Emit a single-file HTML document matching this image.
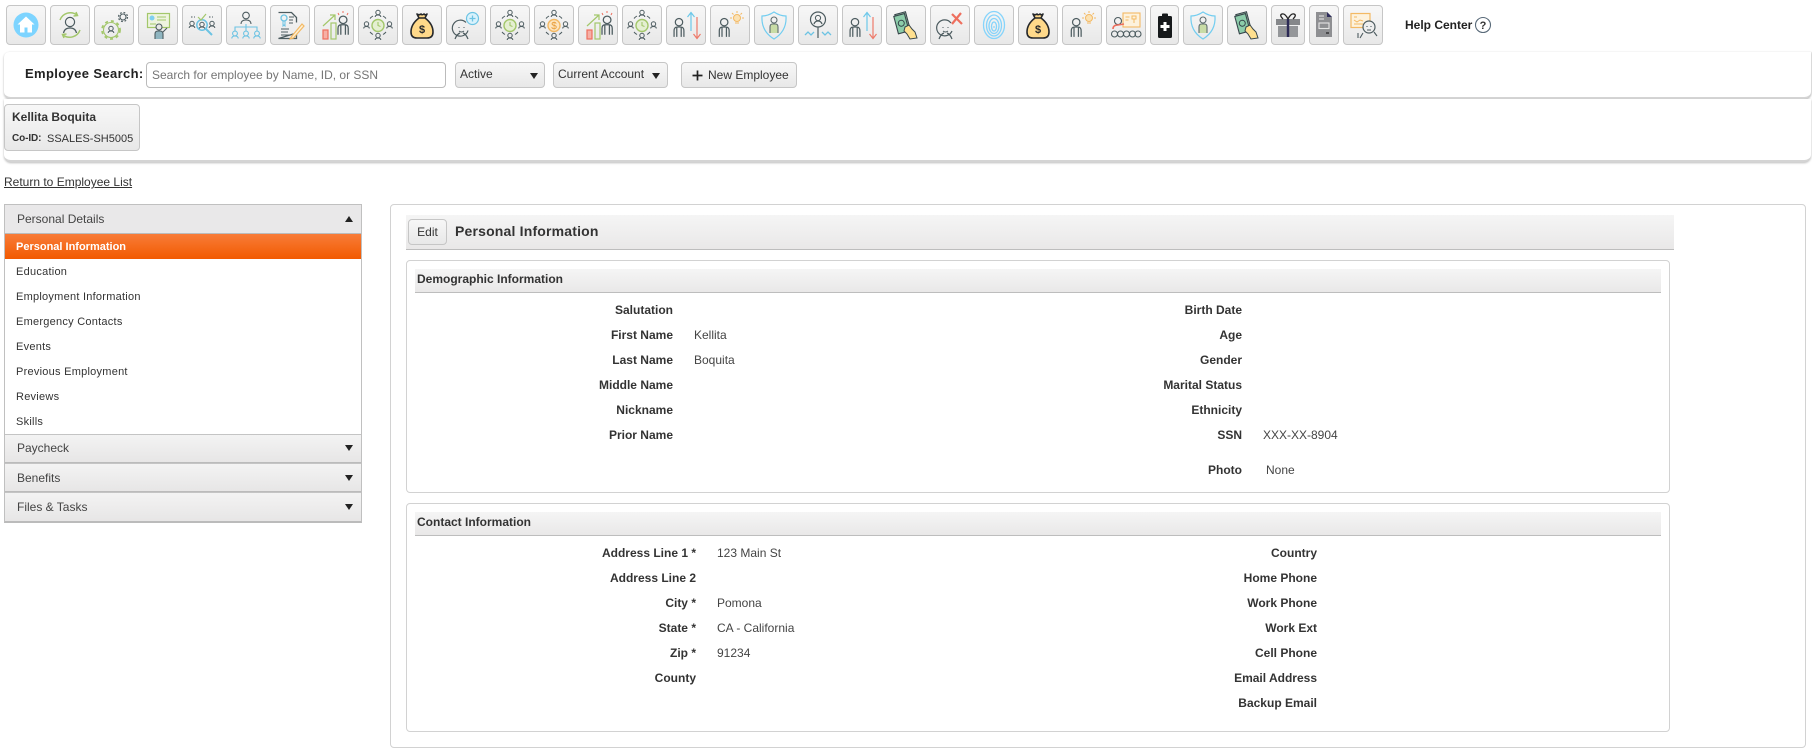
<!DOCTYPE html>
<html><head><meta charset="utf-8"><title>Personal Information</title>
<style>
html,body{margin:0;padding:0;background:#fff;width:1812px;height:753px;overflow:hidden}
body{font-family:"Liberation Sans",Arial,sans-serif;font-size:12px;color:#333;position:relative}
div,span,a,input{box-sizing:border-box}
.a{position:absolute}
.ib{position:absolute;top:5px;height:40px;width:40px;border:1px solid #c6c6c6;border-radius:4px;background:linear-gradient(#f7f7f7,#e8e8e8);overflow:hidden}
.ib svg{position:absolute;left:50%;top:-1px;margin-left:-20px;width:40px;height:40px}
.panel{position:absolute;left:4px;width:1807px;background:#fff;border-radius:0 0 7px 7px;border-bottom:2px solid #d4d4d4;box-shadow:0 1px 2px #bbb}
.btn{position:absolute;border:1px solid #c6c6c6;border-radius:4px;background:linear-gradient(#f7f7f7,#e8e8e8);color:#333}
.t{position:absolute;line-height:20px;white-space:nowrap}
.l{position:absolute;line-height:20px;white-space:nowrap;text-align:right;font-weight:bold;font-size:12px;color:#333}
.v{position:absolute;line-height:20px;white-space:nowrap;font-size:12px;color:#444}
.tri{position:absolute;width:0;height:0;border-left:5px solid transparent;border-right:5px solid transparent}
.up{border-bottom:7px solid #222}.dn{border-top:7px solid #222}
.sh{position:absolute;left:5px;width:356px;height:29px;background:linear-gradient(#f3f3f3,#e7e6e6);border-bottom:1px solid #bbb;color:#444;font-size:12px;line-height:28px;padding-left:12px}
.ni{position:absolute;left:16px;font-size:11px;line-height:20px;color:#333;letter-spacing:.25px;white-space:nowrap}
.box{position:absolute;border:1px solid #d2d2d2;border-radius:4px;background:#fff}
.hd{position:absolute;background:linear-gradient(#f5f5f5,#e9e8e8);border-bottom:1px solid #bdbdbd}
</style></head><body>
<svg width="0" height="0" style="position:absolute">
<defs>
<g id="p"><circle cx="0" cy="-5" r="3" fill="none" stroke="#4d5c60" stroke-width="1"/><path d="M-4 7V2q0-3 2.500-3h3q2.500 0 2.500 3v5M-1.800 -1v8M1.800 -1v8" fill="none" stroke="#4d5c60" stroke-width="1"/></g>
<g id="h"><circle cx="0" cy="-1.500" r="2.200" fill="none" stroke="#4d5c60" stroke-width="1"/><path d="M-2.800 3q0-2 2.800-2t2.800 2" fill="none" stroke="#4d5c60" stroke-width="1"/></g>
<g id="hb"><circle cx="0" cy="-1.500" r="2.400" fill="none" stroke="#6cc3e3" stroke-width="1.100"/><path d="M-3.200 3.500q0-2.500 3.200-2.500t3.200 2.500" fill="none" stroke="#6cc3e3" stroke-width="1.100"/></g>
<g id="cp"><use href="#h" x="20" y="9"/><use href="#h" x="20" y="32"/><use href="#h" x="8.500" y="20.500"/><use href="#h" x="31.500" y="20.500"/><path d="M12 13.500A11 11 0 0 1 15 11M25 11A11 11 0 0 1 28 13.500M12 27A11 11 0 0 0 15 29.500M25 29.500A11 11 0 0 0 28 27" fill="none" stroke="#4d5c60" stroke-width="1"/></g>
<g id="chart"><rect x="9" y="25" width="5" height="9" fill="#f6b0a6" stroke="#ee6f5e" stroke-width="1.200"/><rect x="17" y="18" width="5" height="16" fill="none" stroke="#a3c76b" stroke-width="1.200"/><path d="M9 21L21 10M16 10h5v5" fill="none" stroke="#a3c76b" stroke-width="1.200"/><use href="#p" x="29" y="21" transform="translate(-8 -5) scale(1.28 1.24)"/><path d="M29 6v2M24 8l1 2M34 8l-1 2" stroke="#ee6f5e" stroke-width="1"/></g>
<g id="bag"><path d="M15 9l2 4h6l2-4q-2 1.500-3 0-2 1.500-3 0-2 1.500-4 0zM17 13q-8 6-8 14 0 6 6 6h10q6 0 6-6 0-8-8-14z" fill="#ffd98a" stroke="#26282b" stroke-width="1.600" stroke-linejoin="round"/><text x="20" y="28" text-anchor="middle" font-family="Liberation Sans" font-weight="bold" font-size="11" fill="#26282b">$</text></g>
<g id="arr"><use href="#p" x="13" y="23" transform="translate(-3 -5) scale(1.23 1.23)"/><path d="M25 26V8M21.500 12L25 7.500 28.500 12" fill="none" stroke="#6cc8ea" stroke-width="1.200"/><path d="M31 12V33M27.500 29L31 33.500 34.500 29" fill="none" stroke="#ee7a6a" stroke-width="1.200"/></g>
<g id="bulb"><use href="#p" x="14" y="23" transform="translate(-3 -5) scale(1.23 1.23)"/><circle cx="27" cy="13" r="3.500" fill="#fbe2b4" stroke="#f3b964" stroke-width="1"/><path d="M25 18h4M27 6v2M20 13h2M32 13h2M22 8l1.500 1.500M32 8l-1.500 1.500" stroke="#f3b964" stroke-width="1"/></g>
<g id="sh"><path d="M20 7q6 4 12 4 1 15-12 23Q7 26 8 11q6 0 12-4z" fill="none" stroke="#72cdf0" stroke-width="1.200"/><circle cx="20" cy="15" r="3" fill="none" stroke="#5e6c6e" stroke-width="1.100"/><path d="M16 28v-6q0-3 2.500-3h3q2.500 0 2.500 3v6" fill="#c8dca6" stroke="#5e6c6e" stroke-width="1.100"/></g>
<g id="mh"><g transform="rotate(-15 16 17)"><rect x="11" y="8" width="11" height="19" fill="#a9c9b0" stroke="#36454a" stroke-width="1.100"/><rect x="9.500" y="9.500" width="11" height="18" fill="#8ccdaa" stroke="#36454a" stroke-width="1.100"/><circle cx="15" cy="18" r="3" fill="none" stroke="#36454a" stroke-width="1"/></g><path d="M19 22l4-2 3 4 3 3 2 6-7 1-3-5-3-3z" fill="#ffe08f" stroke="#36454a" stroke-width="1"/></g>
</defs></svg>

<!-- toolbar -->
<div class="ib" style="left:6px"><svg viewBox="0 0 40 40"><circle cx="20" cy="20" r="12.500" fill="#7dd4ff"/><path d="M20 11.500L11.500 19.500h2.500v8h4.500v-5h3v5h4.500v-8h2.500z" fill="#fff"/></svg></div>
<div class="ib" style="left:50px"><svg viewBox="0 0 40 40"><path d="M10 15A11 11 0 0 1 27 10M30 25A11 11 0 0 1 13 30M26 7l1.500 3.500L23.500 11M14 33l-1.500-3.500 4-.5" fill="none" stroke="#a3c76b" stroke-width="1.500"/><circle cx="20" cy="17" r="4.600" fill="none" stroke="#4d5c60" stroke-width="1.200"/><path d="M13.500 28q1-5 6.500-5t6.500 5" fill="none" stroke="#4d5c60" stroke-width="1.200"/></svg></div>
<div class="ib" style="left:94px"><svg viewBox="0 0 40 40"><circle cx="17" cy="25" r="7.500" fill="none" stroke="#a3c76b" stroke-width="1.100"/><circle cx="17" cy="25" r="9" fill="none" stroke="#a3c76b" stroke-width="1.800" stroke-dasharray="3 3"/><use href="#h" x="17" y="25"/><circle cx="29" cy="12" r="3" fill="none" stroke="#4d5c60" stroke-width="1.100"/><circle cx="29" cy="12" r="4.500" fill="none" stroke="#4d5c60" stroke-width="1.200" stroke-dasharray="1.800 1.800"/></svg></div>
<div class="ib" style="left:138px"><svg viewBox="0 0 40 40"><rect x="9.500" y="8.500" width="22" height="14" fill="#eef4df" stroke="#a3c76b" stroke-width="1.200"/><circle cx="14" cy="13" r="2.500" fill="#7fd0f0"/><path d="M19 12h9M19 15h9M12 19h6" stroke="#a3c76b" stroke-width="1"/><circle cx="21" cy="22" r="3" fill="#e8e8e8" stroke="#4d5c60" stroke-width="1.100"/><path d="M17 34v-5q0-3 3-3h2q3 0 3 3v5" fill="#8fb5c0" stroke="#4d5c60" stroke-width="1.100"/><path d="M25 27l4-4" stroke="#4d5c60" stroke-width="1.100"/></svg></div>
<div class="ib" style="left:182px"><svg viewBox="0 0 40 40"><use href="#h" x="10" y="20"/><use href="#h" x="30" y="20"/><use href="#h" x="20" y="21"/><circle cx="20" cy="20" r="5.200" fill="none" stroke="#6cc3e3" stroke-width="1.500"/><path d="M24 24l6 6" stroke="#6cc3e3" stroke-width="2"/><path d="M16 12l3 3 5-6" fill="none" stroke="#a3c76b" stroke-width="1.200"/><path d="M9 12h4M27 12h4" stroke="#4d5c60" stroke-width="1" stroke-dasharray="1.500 1.500"/></svg></div>
<div class="ib" style="left:226px"><svg viewBox="0 0 40 40"><circle cx="20" cy="10.500" r="3.300" fill="none" stroke="#4d5c60" stroke-width="1.100"/><path d="M15 19q0-4 5-4t5 4" fill="none" stroke="#4d5c60" stroke-width="1.100"/><path d="M20 19v3M9 26v-4h22v4M20 22v4" fill="none" stroke="#6cc3e3" stroke-width="1.100"/><use href="#hb" x="9" y="30"/><use href="#hb" x="20" y="30"/><use href="#hb" x="31" y="30"/></svg></div>
<div class="ib" style="left:270px"><svg viewBox="0 0 40 40"><path d="M8.500 7.500h13l5 5v5M26.500 28v5.500h-18z" fill="none" stroke="#4d5c60" stroke-width="1.300"/><circle cx="14" cy="13" r="3" fill="none" stroke="#6cc3e3" stroke-width="1.300"/><path d="M13 16v5l1-1 1 1v-5" fill="none" stroke="#6cc3e3" stroke-width="1"/><path d="M19 12h5M19 15h4M19 18h4M11 24h8M11 27h7M11 30h9" stroke="#4d5c60" stroke-width="1"/><path d="M22 31l-2 3 3.500-1L34 21l-2-2z" fill="#fff0d4" stroke="#f3b964" stroke-width="1.200"/></svg></div>
<div class="ib" style="left:314px"><svg viewBox="0 0 40 40"><use href="#chart"/></svg></div>
<div class="ib" style="left:358px"><svg viewBox="0 0 40 40"><use href="#cp"/><circle cx="20" cy="20.500" r="6" fill="#e5efd2" stroke="#a3c76b" stroke-width="1.400"/><path d="M20 17v3.500l2.500 1" fill="none" stroke="#a3c76b" stroke-width="1.100"/></svg></div>
<div class="ib" style="left:402px"><svg viewBox="0 0 40 40"><use href="#bag"/></svg></div>
<div class="ib" style="left:446px"><svg viewBox="0 0 40 40"><path d="M20 17.500a8 8 0 1 0 2 8M9 34q2-5 5-6M22 34q-2-5-5-6" fill="none" stroke="#4d5c60" stroke-width="1.200"/><path d="M13 22v1M18 22v1M13 26q2.500 2 5 0" fill="none" stroke="#4d5c60" stroke-width="1"/><circle cx="26.500" cy="13.500" r="6" fill="#d8f2fc" stroke="#6cc3e3" stroke-width="1.200"/><path d="M26.500 10.500v6M23.500 13.500h6" stroke="#6cc3e3" stroke-width="1.300"/></svg></div>
<div class="ib" style="left:490px"><svg viewBox="0 0 40 40"><use href="#cp"/><circle cx="20" cy="20.500" r="6" fill="#e5efd2" stroke="#a3c76b" stroke-width="1.400"/><path d="M20 17v3.500l2.500 1" fill="none" stroke="#a3c76b" stroke-width="1.100"/></svg></div>
<div class="ib" style="left:534px"><svg viewBox="0 0 40 40"><use href="#cp"/><circle cx="20" cy="20.500" r="6" fill="#fde5bf" stroke="#f3b964" stroke-width="1.400"/><text x="20" y="24" text-anchor="middle" font-family="Liberation Sans" font-size="10" fill="#e79a33">$</text></svg></div>
<div class="ib" style="left:578px"><svg viewBox="0 0 40 40"><use href="#chart"/></svg></div>
<div class="ib" style="left:622px"><svg viewBox="0 0 40 40"><use href="#cp"/><circle cx="20" cy="20.500" r="6" fill="#e5efd2" stroke="#a3c76b" stroke-width="1.400"/><path d="M20 17v3.500l2.500 1" fill="none" stroke="#a3c76b" stroke-width="1.100"/></svg></div>
<div class="ib" style="left:666px"><svg viewBox="0 0 40 40"><use href="#arr"/></svg></div>
<div class="ib" style="left:710px"><svg viewBox="0 0 40 40"><use href="#bulb"/></svg></div>
<div class="ib" style="left:754px"><svg viewBox="0 0 40 40"><use href="#sh"/></svg></div>
<div class="ib" style="left:798px"><svg viewBox="0 0 40 40"><circle cx="20" cy="14.500" r="7.500" fill="none" stroke="#4d5c60" stroke-width="1.200"/><circle cx="20" cy="13" r="2.600" fill="none" stroke="#4d5c60" stroke-width="1"/><path d="M16 19q1-3 4-3t4 3M20 22v11" fill="none" stroke="#4d5c60" stroke-width="1.200"/><path d="M7 30l3-3 3 3 3-3M24 27l3 3 3-3 3 3" fill="none" stroke="#6cc3e3" stroke-width="1.300"/></svg></div>
<div class="ib" style="left:842px"><svg viewBox="0 0 40 40"><use href="#arr"/></svg></div>
<div class="ib" style="left:886px"><svg viewBox="0 0 40 40"><use href="#mh"/></svg></div>
<div class="ib" style="left:930px"><svg viewBox="0 0 40 40"><path d="M21 18a8 8 0 1 0 1 8M9 34q2-5 5-6M22 34q-2-5-5-6" fill="none" stroke="#4d5c60" stroke-width="1.200"/><path d="M13 22v1M18 22v1M13 26q2.500 2 5 0" fill="none" stroke="#4d5c60" stroke-width="1"/><path d="M22 9l10 10M31 8L22 19" stroke="#ee6f5e" stroke-width="2.200"/></svg></div>
<div class="ib" style="left:974px"><svg viewBox="0 0 40 40"><g fill="none" stroke="#86d4fb" stroke-width="1.300"><ellipse cx="20" cy="20" rx="10.500" ry="13.500"/><ellipse cx="20" cy="20.500" rx="7.500" ry="10.500"/><ellipse cx="20" cy="21" rx="5" ry="7.500"/><ellipse cx="20" cy="21.500" rx="2.500" ry="4.500"/></g><circle cx="20" cy="22" r=".9" fill="#86d4fb"/></svg></div>
<div class="ib" style="left:1018px"><svg viewBox="0 0 40 40"><use href="#bag"/></svg></div>
<div class="ib" style="left:1062px"><svg viewBox="0 0 40 40"><use href="#bulb"/></svg></div>
<div class="ib" style="left:1106px"><svg viewBox="0 0 40 40"><rect x="17" y="8" width="17" height="14" fill="#fdf2dd" stroke="#f3b964" stroke-width="1.100"/><path d="M19.500 12h4M19.500 15h3M26 11h4v3h-4zM28 14v4" fill="none" stroke="#f3b964" stroke-width="1"/><circle cx="12" cy="16" r="3.500" fill="none" stroke="#4d5c60" stroke-width="1.100"/><path d="M7 24q0-4 5-4l6-1" fill="none" stroke="#ee6f5e" stroke-width="1.600"/><g fill="none" stroke="#4d5c60" stroke-width="1.100"><circle cx="8.500" cy="29" r="3"/><circle cx="14.500" cy="29" r="3"/><circle cx="20.500" cy="29" r="3"/><circle cx="26.500" cy="29" r="3"/><circle cx="32" cy="29" r="3"/></g></svg></div>
<div class="ib" style="left:1150px;width:29px"><svg viewBox="0 0 40 40"><rect x="13" y="11" width="14" height="22" rx="1.500" fill="#16191b"/><rect x="17" y="8.500" width="6" height="4" rx="1" fill="#16191b"/><path d="M18.500 17h3v3h3v3h-3v3h-3v-3h-3v-3h3z" fill="#fff"/></svg></div>
<div class="ib" style="left:1183px"><svg viewBox="0 0 40 40"><use href="#sh"/></svg></div>
<div class="ib" style="left:1227px"><svg viewBox="0 0 40 40"><use href="#mh"/></svg></div>
<div class="ib" style="left:1271px;width:34px"><svg viewBox="0 0 40 40"><rect x="8" y="14" width="24" height="6" fill="#85878a"/><rect x="10" y="21" width="20" height="11" fill="#949699"/><rect x="18.800" y="14" width="2.400" height="18" fill="#2c2a55"/><path d="M20 14q-3-6-6-5t1 5M20 14q3-6 6-5t-1 5" fill="none" stroke="#222" stroke-width="1.300"/></svg></div>
<div class="ib" style="left:1309px;width:30px"><svg viewBox="0 0 40 40"><path d="M12 7h11l5 5v20H12z" fill="#8e8f92"/><path d="M23 7l5 5h-5z" fill="#2d2c5a"/><path d="M15 11h5M15 14h5" stroke="#eee" stroke-width="1"/><rect x="15" y="18" width="10" height="5.500" fill="none" stroke="#e4e4e4" stroke-width="1.100"/><path d="M22 28h3" stroke="#222" stroke-width="1.200"/></svg></div>
<div class="ib" style="left:1343px"><svg viewBox="0 0 40 40"><rect x="8" y="8.500" width="19" height="14" fill="#fdf2dd" stroke="#f3b964" stroke-width="1.200"/><path d="M11 12h3M11 15l3 2 3-2 3 1M11 19h9" fill="none" stroke="#f3b964" stroke-width="1"/><circle cx="26" cy="22" r="6" fill="#eee" stroke="#4d5c60" stroke-width="1.200"/><path d="M24 21v1M28 21v1M24 25h4M20 28l-3 5M31 27l3 4M15 28v5" fill="none" stroke="#4d5c60" stroke-width="1.100"/></svg></div>
<div class="t" style="left:1405px;top:15px;font-size:12px;font-weight:bold;color:#222">Help Center</div>
<svg class="a" style="left:1474px;top:16px" width="18" height="18" viewBox="0 0 18 18"><circle cx="9" cy="9" r="7.500" fill="#fff" stroke="#5a6b7a" stroke-width="1.100"/><text x="9" y="13" text-anchor="middle" font-family="Liberation Sans" font-weight="bold" font-size="11" fill="#333">?</text></svg>

<!-- search panel -->
<div class="panel" style="top:52px;height:47px;border-top-left-radius:5px;border-top-right-radius:0;box-shadow:0 1px 2px #bbb,1px 0 1px #e6e6e6"></div>
<div class="t" style="left:25px;top:64px;font-size:13px;font-weight:bold;color:#222;letter-spacing:.37px">Employee Search:</div>
<div class="a" style="left:146px;top:62px;width:300px;height:26px;border:1px solid #bbb;border-radius:4px;background:#fff;color:#757575;font-size:12px;line-height:25px;padding-left:5px">Search for employee by Name, ID, or SSN</div>
<div class="btn" style="left:455px;top:62px;width:90px;height:26px;line-height:22px;padding-left:4px;font-size:12px">Active</div><div class="tri dn" style="left:530px;top:73px;border-left-width:4px;border-right-width:4px;border-top-width:6px"></div>
<div class="btn" style="left:553px;top:62px;width:115px;height:26px;line-height:22px;padding-left:4px;font-size:12px">Current Account</div><div class="tri dn" style="left:652px;top:73px;border-left-width:4px;border-right-width:4px;border-top-width:6px"></div>
<div class="btn" style="left:681px;top:62px;width:116px;height:26px;line-height:24px;padding-left:26px;font-size:12px">New Employee</div>
<svg class="a" style="left:691px;top:69px" width="13" height="13"><path d="M6.500 1.500v10M1.500 6.500h10" stroke="#222" stroke-width="1.700"/></svg>

<!-- employee panel -->
<div class="panel" style="top:99px;height:63px"></div>
<div class="btn" style="left:4px;top:104px;width:136px;height:47px"></div>
<div class="t" style="left:12px;top:107px;font-size:12px;font-weight:bold;color:#333">Kellita Boquita</div>
<div class="t" style="left:12px;top:129px;font-size:10px;font-weight:bold;color:#333;letter-spacing:-.1px">Co-ID:</div>
<div class="t" style="left:47px;top:129px;font-size:11px;color:#333">SSALES-SH5005</div>

<a class="t" style="left:4px;top:172px;font-size:12px;color:#333;text-decoration:underline">Return to Employee List</a>

<!-- sidebar -->
<div class="a" style="left:4px;top:204px;width:358px;height:319px;border:1px solid #c0c0c0;border-bottom:2px solid #bbb;background:#fff"></div>
<div class="sh" style="top:205px;background:#e9e8e9">Personal Details</div><div class="tri up" style="left:345px;top:216px;border-left-width:4px;border-right-width:4px;border-bottom-width:6px"></div>
<div class="a" style="left:5px;top:234px;width:356px;height:25px;background:linear-gradient(#f87c38,#f25a00);color:#fff;font-size:11px;font-weight:bold;line-height:27px;padding-left:11px">Personal Information</div>
<div class="ni" style="top:262px">Education</div>
<div class="ni" style="top:287px">Employment Information</div>
<div class="ni" style="top:312px">Emergency Contacts</div>
<div class="ni" style="top:337px">Events</div>
<div class="ni" style="top:362px">Previous Employment</div>
<div class="ni" style="top:387px">Reviews</div>
<div class="ni" style="top:412px">Skills</div>
<div class="sh" style="top:434px;border-top:1px solid #c4c4c4;line-height:27px">Paycheck</div><div class="tri dn" style="left:345px;top:445px;border-left-width:4px;border-right-width:4px;border-top-width:6px"></div>
<div class="sh" style="top:463px;border-top:1px solid #c4c4c4;line-height:28px">Benefits</div><div class="tri dn" style="left:345px;top:475px;border-left-width:4px;border-right-width:4px;border-top-width:6px"></div>
<div class="sh" style="top:492px;border-top:1px solid #c4c4c4;line-height:29px;height:30px">Files &amp; Tasks</div><div class="tri dn" style="left:345px;top:504px;border-left-width:4px;border-right-width:4px;border-top-width:6px"></div>

<!-- main -->
<div class="box" style="left:390px;top:204px;width:1416px;height:544px"></div>
<div class="hd" style="left:406px;top:215px;width:1268px;height:35px"></div>
<div class="btn" style="left:408px;top:219px;width:39px;height:26px;text-align:center;line-height:24px;font-size:12px">Edit</div>
<div class="t" style="left:455px;top:221px;font-size:14px;font-weight:bold;color:#333;letter-spacing:.18px">Personal Information</div>

<div class="box" style="left:406px;top:260px;width:1264px;height:233px"></div>
<div class="hd" style="left:415px;top:269px;width:1246px;height:24px"></div>
<div class="t" style="left:417px;top:269px;font-size:12px;font-weight:bold;color:#333">Demographic Information</div>

<div class="l" style="left:473px;width:200px;top:300px">Salutation</div>
<div class="l" style="left:473px;width:200px;top:325px">First Name</div><div class="v" style="left:694px;top:325px">Kellita</div>
<div class="l" style="left:473px;width:200px;top:350px">Last Name</div><div class="v" style="left:694px;top:350px">Boquita</div>
<div class="l" style="left:473px;width:200px;top:375px">Middle Name</div>
<div class="l" style="left:473px;width:200px;top:400px">Nickname</div>
<div class="l" style="left:473px;width:200px;top:425px">Prior Name</div>

<div class="l" style="left:1042px;width:200px;top:300px">Birth Date</div>
<div class="l" style="left:1042px;width:200px;top:325px">Age</div>
<div class="l" style="left:1042px;width:200px;top:350px">Gender</div>
<div class="l" style="left:1042px;width:200px;top:375px">Marital Status</div>
<div class="l" style="left:1042px;width:200px;top:400px">Ethnicity</div>
<div class="l" style="left:1042px;width:200px;top:425px">SSN</div><div class="v" style="left:1263px;top:425px">XXX-XX-8904</div>
<div class="l" style="left:1042px;width:200px;top:460px">Photo</div><div class="v" style="left:1266px;top:460px">None</div>

<div class="box" style="left:406px;top:503px;width:1264px;height:229px"></div>
<div class="hd" style="left:415px;top:512px;width:1246px;height:24px"></div>
<div class="t" style="left:417px;top:512px;font-size:12px;font-weight:bold;color:#333">Contact Information</div>

<div class="l" style="left:496px;width:200px;top:543px">Address Line 1 *</div><div class="v" style="left:717px;top:543px">123 Main St</div>
<div class="l" style="left:496px;width:200px;top:568px">Address Line 2</div>
<div class="l" style="left:496px;width:200px;top:593px">City *</div><div class="v" style="left:717px;top:593px">Pomona</div>
<div class="l" style="left:496px;width:200px;top:618px">State *</div><div class="v" style="left:717px;top:618px">CA - California</div>
<div class="l" style="left:496px;width:200px;top:643px">Zip *</div><div class="v" style="left:717px;top:643px">91234</div>
<div class="l" style="left:496px;width:200px;top:668px">County</div>

<div class="l" style="left:1117px;width:200px;top:543px">Country</div>
<div class="l" style="left:1117px;width:200px;top:568px">Home Phone</div>
<div class="l" style="left:1117px;width:200px;top:593px">Work Phone</div>
<div class="l" style="left:1117px;width:200px;top:618px">Work Ext</div>
<div class="l" style="left:1117px;width:200px;top:643px">Cell Phone</div>
<div class="l" style="left:1117px;width:200px;top:668px">Email Address</div>
<div class="l" style="left:1117px;width:200px;top:693px">Backup Email</div>
</body></html>
